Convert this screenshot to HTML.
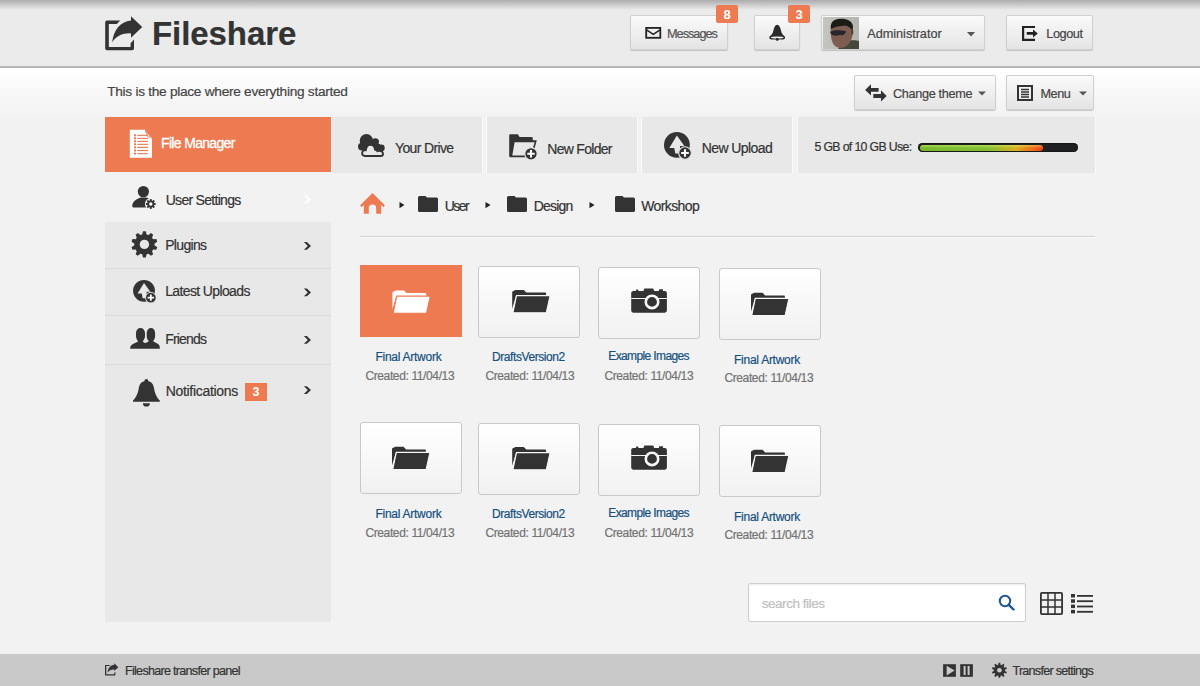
<!DOCTYPE html>
<html><head><meta charset="utf-8">
<style>
*{margin:0;padding:0;box-sizing:border-box}
html,body{width:1200px;height:686px;overflow:hidden}
body{position:relative;background:#f2f2f2;font-family:"Liberation Sans",sans-serif;color:#333}
.a{position:absolute}
.t{position:absolute;white-space:nowrap;line-height:1;-webkit-text-stroke:0.2px currentColor}
#hdr{left:0;top:0;width:1200px;height:68px;background:#ebebeb;border-bottom:2px solid #b8b8b8}
#hdr:before{content:"";position:absolute;left:0;top:0;right:0;height:10px;background:linear-gradient(#acacac,rgba(235,235,235,0))}
#main{left:0;top:68px;width:1200px;height:50px;background:linear-gradient(#fff,#f2f2f2)}
.btn{position:absolute;border:1px solid #d0d0d0;border-radius:2px;background:linear-gradient(#fafafa,#e4e4e4);box-shadow:0 1px 1px rgba(0,0,0,.18)}
.badge{position:absolute;width:22px;height:18px;background:#ee7a52;border-radius:2px;color:#fff;font-weight:bold;font-size:13px;text-align:center;line-height:19.5px}
.tb{position:absolute;top:117px;height:56px;background:#e8e8e8;border-left:1px solid #fafafa;border-right:1px solid #fafafa}
.side{position:absolute;left:105px;width:226px;background:#e8e8e8}
.row{position:absolute;left:105px;width:226px;border-top:1px solid #d6d6d6}
.tile{position:absolute;width:102px;height:72px;border:1px solid #c9c9c9;border-radius:3px;background:linear-gradient(#fff,#f1f1f1)}
.nm{color:#1b5b8b;font-size:12px}
.dt{color:#777;font-size:12px}
#foot{left:0;top:654px;width:1200px;height:32px;background:#c9c9c9}
</style></head><body>
<div id="hdr" class="a"></div>
<div id="main" class="a"></div>
<svg class="a" style="left:100px;top:12px" width="48" height="42" viewBox="100 12 48 42">
<path d="M105.2 22.5Q105.2 20.6 107 20.6H120.2L116.8 24H108.8V46.9H130.6V43.2L134 39.6V48.5Q134 50.3 132.2 50.3H107Q105.2 50.3 105.2 48.5Z" fill="#333"/>
<path d="M112.2 42.2C113.5 30 120 21.8 131 20.4V16.2L142.2 27L131 37.8V33.4C122.5 33 116.5 36 112.2 42.2Z" fill="#333"/>
</svg>
<div class="t" style="left:152.00px;top:17.15px;font-size:33.00px;letter-spacing:-0.075px;color:#333;font-weight:bold;">Fileshare</div>
<div class="btn" style="left:630px;top:15px;width:98px;height:35px"></div>
<svg class="a" style="left:640px;top:22px" width="25" height="22" viewBox="640 22 25 22"><rect x="646.2" y="27.9" width="14.1" height="9.9" fill="none" stroke="#222" stroke-width="1.8"/><path d="M646.5 29.8L653.3 34.3L660 29.8" fill="none" stroke="#222" stroke-width="1.5"/></svg>
<div class="t" style="left:667.00px;top:27.91px;font-size:12.70px;letter-spacing:-0.986px;color:#555;">Messages</div>
<div class="badge" style="left:716px;top:5px">8</div>
<div class="btn" style="left:754px;top:15px;width:46px;height:35px"></div>
<svg class="a" style="left:762px;top:20px" width="30" height="26" viewBox="762 20 30 26"><path d="M777.2 24.7C775.2 24.8 774 27.5 773.4 30.5C772.8 33.5 771.6 35 769.8 36.3C768.8 37.3 769.3 39.4 771.2 39.6H783.2C785.1 39.4 785.6 37.3 784.6 36.3C782.8 35 781.6 33.5 781 30.5C780.4 27.5 779.2 24.8 777.2 24.7Z" fill="#2a2a2a"/><ellipse cx="777.2" cy="37.6" rx="6.3" ry="1.05" fill="#f2f2f2"/><circle cx="777.2" cy="39.3" r="1.5" fill="#2a2a2a"/></svg>
<div class="badge" style="left:788px;top:5px">3</div>
<div class="btn" style="left:821px;top:15px;width:164px;height:35px"></div>
<svg class="a" style="left:823px;top:17px" width="36" height="32" viewBox="823 17 36 32"><defs><linearGradient id="avg" x1="0" x2="1"><stop offset="0" stop-color="#c4c4c1"/><stop offset="1" stop-color="#b4b4b0"/></linearGradient><filter id="bl"><feGaussianBlur stdDeviation="0.6"/></filter></defs><rect x="823" y="17" width="36" height="32" fill="url(#avg)"/>
<g filter="url(#bl)">
<path d="M838 49L844 42C849 40 856 40 859 41V49Z" fill="#45463b"/>
<path d="M831 27C830 33 831 41 834 45C837 48 841 49 845 47C850 44 853 38 853 31C853 25 848 22 842 22C836 22 832 23 831 27Z" fill="#7d5d50"/>
<path d="M831 29C830 24 832 20 838 19C845 18 852 20 853 26L852.5 31C851 28 849 26.5 845 25.5C840 26 835 26.5 831 29Z" fill="#1d1b19"/>
<path d="M851 29C853 29 854 31 853 34L851 35Z" fill="#5a3f34"/>
<path d="M830 32C833 30 838 30 846 31C846 34 843 36 840 35C837 36 834 36 832 35Z" fill="#25272c"/>
<path d="M835 44C837 45 839 45 841 44" stroke="#8a5a55" stroke-width="1" fill="none"/>
</g></svg>
<div class="t" style="left:867.30px;top:27.70px;font-size:12.70px;letter-spacing:-0.033px;color:#444;">Administrator</div>
<svg class="a" style="left:967px;top:32px" width="8" height="5" viewBox="0 0 8 5"><path d="M0 0H8L4 4.5Z" fill="#555"/></svg>
<div class="btn" style="left:1006px;top:15px;width:87px;height:35px"></div>
<svg class="a" style="left:1015px;top:22px" width="28" height="22" viewBox="1015 22 28 22"><path d="M1035 27H1023.1V39.8H1035" fill="none" stroke="#222" stroke-width="2.2"/><path d="M1026.7 32.1H1033V29.5L1037.8 33.4L1033 37.6V34.8H1026.7Z" fill="#222"/></svg>
<div class="t" style="left:1046.30px;top:27.91px;font-size:12.70px;letter-spacing:-0.420px;color:#444;">Logout</div>
<div class="btn" style="left:854px;top:75px;width:142px;height:35px"></div>
<svg class="a" style="left:860px;top:78px" width="32" height="28" viewBox="860 78 32 28"><path d="M865.1 90L871 84.3V88H878.6V91.8H871V95.6Z" fill="#333"/><path d="M886.7 96L881 90.2V94.1H873.3V97.9H881V101.6Z" fill="#333"/></svg>
<div class="t" style="left:893.00px;top:87.80px;font-size:12.70px;letter-spacing:-0.336px;color:#444;">Change theme</div>
<svg class="a" style="left:978px;top:91px" width="8" height="5" viewBox="0 0 8 5"><path d="M0 0.5H8L4 4.5Z" fill="#555"/></svg>
<div class="btn" style="left:1006px;top:75px;width:88px;height:35px"></div>
<svg class="a" style="left:1017px;top:85px" width="16" height="16" viewBox="0 0 16 16"><rect x="1" y="1" width="14" height="14" fill="none" stroke="#333" stroke-width="2"/><path d="M4 4.5H12M4 7H12M4 9.5H12M4 12H12" stroke="#333" stroke-width="1.4"/></svg>
<div class="t" style="left:1040.40px;top:87.80px;font-size:12.70px;letter-spacing:-0.400px;color:#444;">Menu</div>
<svg class="a" style="left:1079px;top:91px" width="8" height="5" viewBox="0 0 8 5"><path d="M0 0.5H8L4 4.5Z" fill="#555"/></svg>
<div class="t" style="left:107.20px;top:84.86px;font-size:13.70px;letter-spacing:-0.288px;color:#444;">This is the place where everything started</div>
<div class="side" style="top:117px;height:505px"></div>
<div class="a" style="left:105px;top:117px;width:226px;height:55px;background:#ee7a52"></div>
<div class="a" style="left:105px;top:172px;width:226px;height:50px;background:#f2f2f2"></div>
<div class="a" style="left:105px;top:268px;width:226px;height:1px;background:#d8d8d8"></div>
<div class="a" style="left:105px;top:315px;width:226px;height:1px;background:#d8d8d8"></div>
<div class="a" style="left:105px;top:364px;width:226px;height:1px;background:#d8d8d8"></div>
<svg class="a" style="left:124px;top:124px" width="36" height="40" viewBox="124 124 36 40"><path d="M129.8 129.8H144.6L152 138.4V157.8H129.8Z" fill="#fff"/><path d="M145.5 131L151 137.5L147.5 136.5Z" fill="#fff" stroke="#ee7a52" stroke-width="0.8"/><g fill="#ee7a52"><rect x="134" y="134.3" width="2" height="2"/><rect x="137.2" y="134.8" width="10.8" height="1.1"/><rect x="134" y="137.3" width="2" height="2"/><rect x="137.2" y="137.8" width="10.8" height="1.1"/><rect x="134" y="140.3" width="2" height="2"/><rect x="137.2" y="140.8" width="10.8" height="1.1"/><rect x="134" y="143.3" width="2" height="2"/><rect x="137.2" y="143.8" width="10.8" height="1.1"/><rect x="134" y="146.4" width="2" height="2"/><rect x="137.2" y="146.9" width="10.8" height="1.1"/><rect x="134" y="149.5" width="2" height="2"/><rect x="137.2" y="150.0" width="10.8" height="1.1"/><rect x="134" y="152.6" width="2" height="2"/><rect x="137.2" y="153.1" width="10.8" height="1.1"/></g></svg>
<div class="t" style="left:161.00px;top:135.90px;font-size:14.00px;letter-spacing:-0.664px;color:#fff;-webkit-text-stroke:0.3px #fff;">File Manager</div>
<svg class="a" style="left:126px;top:180px" width="36" height="34" viewBox="126 180 36 34"><ellipse cx="143.4" cy="191.6" rx="5.6" ry="5.7" fill="#333"/><path d="M132.2 206C132.5 201.5 136 199 140.5 197.4H146.5C148 198 149.5 199 150.5 199.5L147 207.4H133.5C132.7 207.4 132.2 206.8 132.2 206Z" fill="#333"/><circle cx="150.8" cy="204" r="5.9" fill="#f2f2f2"/><g fill="#333"><circle cx="150.80" cy="204.00" r="3.50"/><rect x="149.85" y="199.10" width="1.90" height="2.20" transform="rotate(0.0 150.80 204.00)"/><rect x="149.85" y="199.10" width="1.90" height="2.20" transform="rotate(45.0 150.80 204.00)"/><rect x="149.85" y="199.10" width="1.90" height="2.20" transform="rotate(90.0 150.80 204.00)"/><rect x="149.85" y="199.10" width="1.90" height="2.20" transform="rotate(135.0 150.80 204.00)"/><rect x="149.85" y="199.10" width="1.90" height="2.20" transform="rotate(180.0 150.80 204.00)"/><rect x="149.85" y="199.10" width="1.90" height="2.20" transform="rotate(225.0 150.80 204.00)"/><rect x="149.85" y="199.10" width="1.90" height="2.20" transform="rotate(270.0 150.80 204.00)"/><rect x="149.85" y="199.10" width="1.90" height="2.20" transform="rotate(315.0 150.80 204.00)"/></g><circle cx="150.80" cy="204.00" r="1.70" fill="#fff"/></svg>
<div class="t" style="left:165.70px;top:193.10px;font-size:14.00px;letter-spacing:-0.708px;color:#333;">User Settings</div>
<svg class="a" style="left:300px;top:192px" width="16" height="16" viewBox="300 192 16 16"><path d="M303.9 0L306.9 0L311 3.9L306.9 7.8L303.9 7.8L307.8 3.9Z" transform="translate(0 195.5)" fill="#fff"/></svg>
<svg class="a" style="left:126px;top:226px" width="36" height="36" viewBox="126 226 36 36"><path d="M142.19 234.44L143.03 231.37L145.77 231.37L146.61 234.44L148.47 235.05L150.95 233.06L153.17 234.66L152.04 237.64L153.19 239.22L156.37 239.07L157.21 241.68L154.55 243.42L154.55 245.38L157.21 247.12L156.37 249.73L153.19 249.58L152.04 251.16L153.17 254.14L150.95 255.74L148.47 253.75L146.61 254.36L145.77 257.43L143.03 257.43L142.19 254.36L140.33 253.75L137.85 255.74L135.63 254.14L136.76 251.16L135.61 249.58L132.43 249.73L131.59 247.12L134.25 245.38L134.25 243.42L131.59 241.68L132.43 239.07L135.61 239.22L136.76 237.64L135.63 234.66L137.85 233.06L140.33 235.05Z" fill="#333"/><circle cx="144.4" cy="244.4" r="4.7" fill="#e8e8e8"/></svg>
<div class="t" style="left:165.20px;top:238.10px;font-size:14.00px;letter-spacing:-0.667px;color:#333;">Plugins</div>
<svg class="a" style="left:300px;top:239px" width="16" height="16" viewBox="300 239 16 16"><path d="M303.9 0L306.9 0L311 3.9L306.9 7.8L303.9 7.8L307.8 3.9Z" transform="translate(0 242.0)" fill="#333"/></svg>
<svg class="a" style="left:126px;top:274px" width="38" height="36" viewBox="126 274 38 36"><g transform="translate(144.00 290.80) scale(0.845)"><circle r="12.9" fill="#333"/><path d="M0 -9.3L7.5 1H3.1V8.7H-1.6L-2.6 3.1H-7.6Z" fill="#e8e8e8"/><circle cx="8.1" cy="8.1" r="6.3" fill="#333" stroke="#e8e8e8" stroke-width="1.1"/><path d="M8.1 4.3V11.9M4.3 8.1H11.9" stroke="#fff" stroke-width="2.1"/></g></svg>
<div class="t" style="left:165.20px;top:283.90px;font-size:14.00px;letter-spacing:-0.631px;color:#333;">Latest Uploads</div>
<svg class="a" style="left:300px;top:285px" width="16" height="16" viewBox="300 285 16 16"><path d="M303.9 0L306.9 0L311 3.9L306.9 7.8L303.9 7.8L307.8 3.9Z" transform="translate(0 288.5)" fill="#333"/></svg>
<svg class="a" style="left:126px;top:322px" width="38" height="32" viewBox="126 322 38 32"><g fill="#333"><path d="M136 333C136 330 138 328 140.5 328C143 328 145 330 145 333V336C145 338 144.2 339.8 142.8 341.2L143.5 342.3C144.5 342.8 145.5 343.2 146.5 343.6L146 348.8H130.2V347.6C130.5 345.6 131.8 344.6 134 343.6L138.2 341.4C136.8 339.8 136 338 136 336ZM146.7 333C146.7 330 148.6 328 151 328C153.4 328 155.1 330 155.1 333V336C155.1 338 154.4 339.8 153.1 341.3L157.2 343.5C159.2 344.5 159.7 345.6 159.8 347.6V348.8H140L143.5 343.8C145.8 343 147.6 342.2 148.8 341.3C147.4 339.8 146.7 338 146.7 336Z"/></g></svg>
<div class="t" style="left:165.20px;top:331.90px;font-size:14.00px;letter-spacing:-0.800px;color:#333;">Friends</div>
<svg class="a" style="left:300px;top:333px" width="16" height="16" viewBox="300 333 16 16"><path d="M303.9 0L306.9 0L311 3.9L306.9 7.8L303.9 7.8L307.8 3.9Z" transform="translate(0 336.0)" fill="#333"/></svg>
<svg class="a" style="left:126px;top:372px" width="40" height="40" viewBox="126 372 40 40"><g fill="#333"><circle cx="146.4" cy="380.8" r="1.9"/><path d="M146.4 381C142 381 139.6 383.5 138.8 388C137.9 393.3 136.6 396.7 133 400.6V401.8H159.8V400.6C156.2 396.7 154.9 393.3 154 388C153.2 383.5 150.8 381 146.4 381Z"/><path d="M142.9 403.2A3.5 3.4 0 0 0 149.9 403.2Z"/></g></svg>
<div class="t" style="left:165.70px;top:383.80px;font-size:14.00px;letter-spacing:-0.308px;color:#333;">Notifications</div>
<div class="badge" style="left:245px;top:383px;width:22px;height:18px;border-radius:0;font-size:12.5px;line-height:19px">3</div>
<svg class="a" style="left:300px;top:383px" width="16" height="16" viewBox="300 383 16 16"><path d="M303.9 0L306.9 0L311 3.9L306.9 7.8L303.9 7.8L307.8 3.9Z" transform="translate(0 386.2)" fill="#333"/></svg>
<div class="tb" style="left:331px;width:152px"></div>
<div class="tb" style="left:486px;width:152px"></div>
<div class="tb" style="left:641px;width:152px"></div>
<div class="tb" style="left:797px;width:299px"></div>
<svg class="a" style="left:352px;top:128px" width="40" height="34" viewBox="352 128 40 34"><g fill="#333"><circle cx="366.4" cy="140.7" r="6.7"/><circle cx="361.9" cy="146.6" r="3.9"/><circle cx="375.3" cy="142" r="3.7"/><circle cx="381.3" cy="147.9" r="3.4"/><rect x="361" y="144" width="19" height="6"/></g>
<path d="M365 156C362.8 156 361.8 154.3 362.2 152.6C362.6 151 364 150 365.8 150.2C366.3 147 368 144.9 370.4 144.9C373 144.9 374.8 147 375 149.6C376 149.8 377 150.4 377.5 151.2C378 151 378.5 150.9 379.5 150.9C381.5 150.9 383 152.3 383 153.9C383 155.2 382 156 380.8 156Z" fill="#e8e8e8" stroke="#333" stroke-width="1.9"/></svg>
<div class="t" style="left:395.00px;top:140.90px;font-size:14.00px;letter-spacing:-0.644px;color:#333;">Your Drive</div>
<svg class="a" style="left:504px;top:128px" width="38" height="34" viewBox="504 128 38 34"><path d="M509.2 135.4Q509.2 134.2 510.4 134.2H517.8L519.6 137H531.5Q532.8 137 532.8 138.4V140.2H536.8L534.4 149L532 157.2H510.4Q509.2 157.2 509.2 156Z" fill="#333"/><path d="M514.6 142.2H534.6L532.6 149.2L530.6 155.5H512.3Z" fill="#e8e8e8"/>
<circle cx="531" cy="153.8" r="6.2" fill="#333" stroke="#e8e8e8" stroke-width="1.1"/><path d="M531 150.1V157.5M527.3 153.8H534.7" stroke="#fff" stroke-width="2.1"/></svg>
<div class="t" style="left:547.30px;top:141.90px;font-size:14.00px;letter-spacing:-0.711px;color:#333;">New Folder</div>
<svg class="a" style="left:658px;top:126px" width="38" height="36" viewBox="658 126 38 36"><g transform="translate(676.90 144.90) scale(1.000)"><circle r="12.9" fill="#333"/><path d="M0 -9.3L7.5 1H3.1V8.7H-1.6L-2.6 3.1H-7.6Z" fill="#e8e8e8"/><circle cx="8.1" cy="8.1" r="6.3" fill="#333" stroke="#e8e8e8" stroke-width="1.1"/><path d="M8.1 4.3V11.9M4.3 8.1H11.9" stroke="#fff" stroke-width="2.1"/></g></svg>
<div class="t" style="left:701.70px;top:140.90px;font-size:14.00px;letter-spacing:-0.567px;color:#333;">New Upload</div>
<div class="t" style="left:814.50px;top:140.54px;font-size:12.30px;letter-spacing:-0.653px;color:#333;">5 GB of 10 GB Use:</div>
<div class="a" style="left:918px;top:143px;width:160px;height:9px;border-radius:5px;background:#1e2022;box-shadow:inset 0 0 2px #000"></div>
<div class="a" style="left:920px;top:144.5px;width:123px;height:6px;border-radius:3px;background:linear-gradient(rgba(230,255,120,.45),rgba(255,255,255,0) 55%),linear-gradient(90deg,#78b830 0%,#82bf33 55%,#d8b020 78%,#f06a1a 92%,#f0401a 100%)"></div>
<svg class="a" style="left:356px;top:188px" width="34" height="30" viewBox="356 188 34 30"><path d="M372.5 193L384.8 205.3L383.6 207.2L381.2 205V213.8H376.2V208.3A3.7 3.7 0 0 0 368.8 208.3V213.8H363.8V205L361.4 207.2L360.2 205.3Z" fill="#ee7a52"/></svg>
<svg class="a" style="left:399px;top:202px" width="6" height="7" viewBox="0 0 6 7"><path d="M0.5 0L5.5 3.1L0.5 6.2Z" fill="#222"/></svg>
<svg class="a" style="left:418px;top:196px" width="20" height="16" viewBox="0 0 20 16"><path d="M0 1.5Q0 0 1.5 0H7.5L9 1.5H18.5Q20 1.5 20 3V14.5Q20 16 18.5 16H1.5Q0 16 0 14.5Z" fill="#333"/></svg>
<div class="t" style="left:444.80px;top:198.85px;font-size:14.00px;letter-spacing:-1.600px;color:#333;">User</div>
<svg class="a" style="left:485px;top:202px" width="6" height="7" viewBox="0 0 6 7"><path d="M0.5 0L5.5 3.1L0.5 6.2Z" fill="#222"/></svg>
<svg class="a" style="left:507px;top:196px" width="20" height="16" viewBox="0 0 20 16"><path d="M0 1.5Q0 0 1.5 0H7.5L9 1.5H18.5Q20 1.5 20 3V14.5Q20 16 18.5 16H1.5Q0 16 0 14.5Z" fill="#333"/></svg>
<div class="t" style="left:533.75px;top:198.85px;font-size:14.00px;letter-spacing:-0.820px;color:#333;">Design</div>
<svg class="a" style="left:589px;top:202px" width="6" height="7" viewBox="0 0 6 7"><path d="M0.5 0L5.5 3.1L0.5 6.2Z" fill="#222"/></svg>
<svg class="a" style="left:615px;top:196px" width="20" height="16" viewBox="0 0 20 16"><path d="M0 1.5Q0 0 1.5 0H7.5L9 1.5H18.5Q20 1.5 20 3V14.5Q20 16 18.5 16H1.5Q0 16 0 14.5Z" fill="#333"/></svg>
<div class="t" style="left:641.25px;top:198.85px;font-size:14.00px;letter-spacing:-0.614px;color:#333;">Workshop</div>
<div class="a" style="left:360px;top:236px;width:735px;height:1px;background:#d2d2d2"></div><div class="a" style="left:360px;top:237px;width:735px;height:1px;background:#fafafa"></div>
<div class="a" style="left:360px;top:265px;width:102px;height:72px;background:#ee7a52"></div>
<svg class="a" style="left:360px;top:265px" width="102" height="72" viewBox="0 0 102 72"><g transform="translate(-1.80 1.20)"><path d="M34.2 43V26.6Q34.2 25.8 35 25.6L37.4 24.2H45.8L48.3 26.9H67.3Q68.1 26.9 68.1 27.7V30H38Z" fill="#fff"/><path d="M38.5 29.9H72.1L68.3 47.1H34.9Z" fill="#fff" stroke="#ee7a52" stroke-width="1.1"/></g></svg>
<div class="t" style="left:375.50px;top:350.90px;font-size:12.00px;letter-spacing:-0.267px;color:#155080;">Final Artwork</div>
<div class="t" style="left:365.40px;top:370.10px;font-size:12.00px;letter-spacing:-0.375px;color:#737373;">Created: 11/04/13</div>
<div class="tile" style="left:478px;top:266px"></div>
<svg class="a" style="left:478px;top:266px" width="102" height="72" viewBox="0 0 102 72"><g transform="translate(0.00 -0.30)"><path d="M34.2 43V26.6Q34.2 25.8 35 25.6L37.4 24.2H45.8L48.3 26.9H67.3Q68.1 26.9 68.1 27.7V30H38Z" fill="#333"/><path d="M38.5 29.9H72.1L68.3 47.1H34.9Z" fill="#333" stroke="#f7f7f7" stroke-width="1.1"/></g></svg>
<div class="t" style="left:492.00px;top:351.30px;font-size:12.00px;letter-spacing:-0.423px;color:#155080;">DraftsVersion2</div>
<div class="t" style="left:485.40px;top:370.30px;font-size:12.00px;letter-spacing:-0.375px;color:#737373;">Created: 11/04/13</div>
<div class="tile" style="left:598px;top:267px"></div>
<svg class="a" style="left:598px;top:267px" width="102" height="72" viewBox="0 0 102 72"><g fill="#333"><path d="M35.3 23.9H37.8L38.4 22.6H40L40.6 23.9H45.4L46.4 21.4H55.2L56.2 23.9H60.8L61.2 22.2H64.8L65.2 23.9H66.8Q68.9 23.9 68.9 26V43.6Q68.9 45.7 66.8 45.7H35.3Q33.2 45.7 33.2 43.6V26Q33.2 23.9 35.3 23.9Z"/></g><path d="M33.2 31.5H68.9" stroke="#f4f4f4" stroke-width="1"/><circle cx="54" cy="34.9" r="6.2" fill="#333" stroke="#f8f8f8" stroke-width="2.6"/><circle cx="48.5" cy="22.4" r="0" fill="#eee"/></svg>
<div class="t" style="left:608.30px;top:350.40px;font-size:12.00px;letter-spacing:-0.623px;color:#155080;">Example Images</div>
<div class="t" style="left:604.40px;top:370.40px;font-size:12.00px;letter-spacing:-0.375px;color:#737373;">Created: 11/04/13</div>
<div class="tile" style="left:719px;top:268px"></div>
<svg class="a" style="left:719px;top:268px" width="102" height="72" viewBox="0 0 102 72"><g transform="translate(-2.20 0.50)"><path d="M34.2 43V26.6Q34.2 25.8 35 25.6L37.4 24.2H45.8L48.3 26.9H67.3Q68.1 26.9 68.1 27.7V30H38Z" fill="#333"/><path d="M38.5 29.9H72.1L68.3 47.1H34.9Z" fill="#333" stroke="#f7f7f7" stroke-width="1.1"/></g></svg>
<div class="t" style="left:734.00px;top:354.20px;font-size:12.00px;letter-spacing:-0.258px;color:#155080;">Final Artwork</div>
<div class="t" style="left:724.40px;top:372.30px;font-size:12.00px;letter-spacing:-0.375px;color:#737373;">Created: 11/04/13</div>
<div class="tile" style="left:360px;top:422px"></div>
<svg class="a" style="left:360px;top:422px" width="102" height="72" viewBox="0 0 102 72"><g transform="translate(-2.20 0.50)"><path d="M34.2 43V26.6Q34.2 25.8 35 25.6L37.4 24.2H45.8L48.3 26.9H67.3Q68.1 26.9 68.1 27.7V30H38Z" fill="#333"/><path d="M38.5 29.9H72.1L68.3 47.1H34.9Z" fill="#333" stroke="#f7f7f7" stroke-width="1.1"/></g></svg>
<div class="t" style="left:375.50px;top:507.90px;font-size:12.00px;letter-spacing:-0.267px;color:#155080;">Final Artwork</div>
<div class="t" style="left:365.40px;top:527.10px;font-size:12.00px;letter-spacing:-0.375px;color:#737373;">Created: 11/04/13</div>
<div class="tile" style="left:478px;top:423px"></div>
<svg class="a" style="left:478px;top:423px" width="102" height="72" viewBox="0 0 102 72"><g transform="translate(0.00 -0.30)"><path d="M34.2 43V26.6Q34.2 25.8 35 25.6L37.4 24.2H45.8L48.3 26.9H67.3Q68.1 26.9 68.1 27.7V30H38Z" fill="#333"/><path d="M38.5 29.9H72.1L68.3 47.1H34.9Z" fill="#333" stroke="#f7f7f7" stroke-width="1.1"/></g></svg>
<div class="t" style="left:492.00px;top:508.30px;font-size:12.00px;letter-spacing:-0.423px;color:#155080;">DraftsVersion2</div>
<div class="t" style="left:485.40px;top:527.30px;font-size:12.00px;letter-spacing:-0.375px;color:#737373;">Created: 11/04/13</div>
<div class="tile" style="left:598px;top:424px"></div>
<svg class="a" style="left:598px;top:424px" width="102" height="72" viewBox="0 0 102 72"><g fill="#333"><path d="M35.3 23.9H37.8L38.4 22.6H40L40.6 23.9H45.4L46.4 21.4H55.2L56.2 23.9H60.8L61.2 22.2H64.8L65.2 23.9H66.8Q68.9 23.9 68.9 26V43.6Q68.9 45.7 66.8 45.7H35.3Q33.2 45.7 33.2 43.6V26Q33.2 23.9 35.3 23.9Z"/></g><path d="M33.2 31.5H68.9" stroke="#f4f4f4" stroke-width="1"/><circle cx="54" cy="34.9" r="6.2" fill="#333" stroke="#f8f8f8" stroke-width="2.6"/><circle cx="48.5" cy="22.4" r="0" fill="#eee"/></svg>
<div class="t" style="left:608.30px;top:507.40px;font-size:12.00px;letter-spacing:-0.623px;color:#155080;">Example Images</div>
<div class="t" style="left:604.40px;top:527.40px;font-size:12.00px;letter-spacing:-0.375px;color:#737373;">Created: 11/04/13</div>
<div class="tile" style="left:719px;top:425px"></div>
<svg class="a" style="left:719px;top:425px" width="102" height="72" viewBox="0 0 102 72"><g transform="translate(-2.20 0.50)"><path d="M34.2 43V26.6Q34.2 25.8 35 25.6L37.4 24.2H45.8L48.3 26.9H67.3Q68.1 26.9 68.1 27.7V30H38Z" fill="#333"/><path d="M38.5 29.9H72.1L68.3 47.1H34.9Z" fill="#333" stroke="#f7f7f7" stroke-width="1.1"/></g></svg>
<div class="t" style="left:734.00px;top:511.20px;font-size:12.00px;letter-spacing:-0.258px;color:#155080;">Final Artwork</div>
<div class="t" style="left:724.40px;top:529.30px;font-size:12.00px;letter-spacing:-0.375px;color:#737373;">Created: 11/04/13</div>
<div class="a" style="left:748px;top:583px;width:278px;height:39px;background:#fff;border:1px solid #cfcfcf;border-radius:2px;box-shadow:inset 0 1px 2px rgba(0,0,0,.08)"></div>
<div class="t" style="left:761.70px;top:596.52px;font-size:13.50px;letter-spacing:-0.455px;color:#c0c0c0;">search files</div>
<svg class="a" style="left:998px;top:594px" width="17" height="17" viewBox="0 0 17 17"><circle cx="7" cy="7" r="5.2" fill="none" stroke="#1f5597" stroke-width="2"/><path d="M10.8 10.8L15.5 15.5" stroke="#1f5597" stroke-width="2.4" stroke-linecap="round"/></svg>
<svg class="a" style="left:1040px;top:592px" width="23" height="23" viewBox="0 0 23 23"><rect x="0.9" y="0.9" width="21.2" height="21.2" rx="1" fill="none" stroke="#333" stroke-width="1.8"/><path d="M8 1V22M15 1V22M1 8H22M1 15H22" stroke="#333" stroke-width="1.5"/></svg>
<svg class="a" style="left:1071px;top:594px" width="23" height="20" viewBox="0 0 23 20"><g fill="#333"><rect x="0" y="0" width="4" height="3.5"/><rect x="0" y="5.3" width="4" height="3.5"/><rect x="0" y="10.6" width="4" height="3.5"/><rect x="0" y="15.9" width="4" height="3.5"/>
<rect x="6" y="1" width="16" height="1.8"/><rect x="6" y="6.3" width="16" height="1.8"/><rect x="6" y="11.6" width="16" height="1.8"/><rect x="6" y="16.9" width="16" height="1.8"/></g></svg>
<div id="foot" class="a"></div>
<svg class="a" style="left:100px;top:658px" width="24" height="24" viewBox="100 658 24 24"><g transform="translate(105 663.3) scale(0.36) translate(-105.2 -16.2)" fill="#333"><path d="M105.2 22.5Q105.2 20.6 107 20.6H120.2L116.8 24H108.8V46.9H130.6V43.2L134 39.6V48.5Q134 50.3 132.2 50.3H107Q105.2 50.3 105.2 48.5Z"/><path d="M112.2 42.2C113.5 30 120 21.8 131 20.4V16.2L142.2 27L131 37.8V33.4C122.5 33 116.5 36 112.2 42.2Z"/></g></svg>
<div class="t" style="left:125.00px;top:665.49px;font-size:12.60px;letter-spacing:-0.726px;color:#333;">Fileshare transfer panel</div>
<svg class="a" style="left:938px;top:658px" width="40" height="24" viewBox="938 658 40 24"><rect x="943.1" y="664.2" width="12.8" height="12.6" fill="#333"/><path d="M946.6 665.8L954.6 670.6L946.6 675.5Z" fill="#cacaca"/><rect x="960.2" y="664.2" width="12.7" height="12.6" fill="#333"/><rect x="963.6" y="666" width="2" height="9" fill="#cacaca"/><rect x="967.6" y="666" width="2" height="9" fill="#cacaca"/></svg>
<svg class="a" style="left:988px;top:658px" width="24" height="24" viewBox="988 658 24 24"><path d="M998.24 664.82L998.61 662.74L1000.19 662.74L1000.56 664.82L1001.68 665.18L1003.20 663.72L1004.49 664.65L1003.56 666.55L1004.25 667.50L1006.34 667.21L1006.83 668.72L1004.97 669.71L1004.97 670.89L1006.83 671.88L1006.34 673.39L1004.25 673.10L1003.56 674.05L1004.49 675.95L1003.20 676.88L1001.68 675.42L1000.56 675.78L1000.19 677.86L998.61 677.86L998.24 675.78L997.12 675.42L995.60 676.88L994.31 675.95L995.24 674.05L994.55 673.10L992.46 673.39L991.97 671.88L993.83 670.89L993.83 669.71L991.97 668.72L992.46 667.21L994.55 667.50L995.24 666.55L994.31 664.65L995.60 663.72L997.12 665.18Z" fill="#333"/><circle cx="999.4" cy="670.3" r="2.3" fill="#cacaca"/></svg>
<div class="t" style="left:1012.40px;top:665.49px;font-size:12.60px;letter-spacing:-0.738px;color:#333;">Transfer settings</div>
</body></html>
